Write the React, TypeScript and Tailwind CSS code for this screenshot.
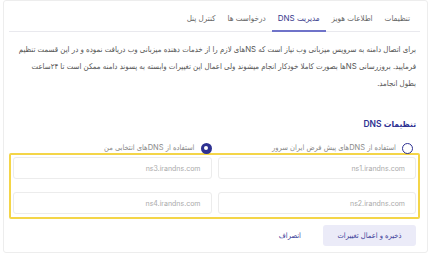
import { useState } from "react";

const tabs = ["تنظیمات", "اطلاعات هویز", "مدیریت DNS", "درخواست ها", "کنترل پنل"];

const servers = ["ns1.irandns.com", "ns3.irandns.com", "ns2.irandns.com", "ns4.irandns.com"];

export default function App() {
  const [active] = useState(2);
  const [mode, setMode] = useState<"default" | "custom">("custom");

  return (
    <div
      dir="rtl"
      className="w-[430px] h-[255px] bg-white pl-[3px] pr-[2px] font-['Inter','DejaVu_Sans_Condensed','DejaVu_Sans',sans-serif]"
    >
      <div className="h-[253px] border border-[#ededed] rounded-[3px] pr-[7px] pl-[5px]">
        {/* tabs */}
        <nav className="flex border-b border-[#e9e9ee] pr-[4px] pt-[10px]">
          {tabs.map((t, i) => (
            <button
              key={t}
              className={
                "px-[6px] pb-[5px] text-[8px] leading-[14px] border-b-2 -mb-px " +
                (i === active ? "border-[#6f73c9] text-[#35388a]" : "border-transparent text-[#666]")
              }
            >
              {t}
            </button>
          ))}
        </nav>

        {/* description */}
        <p className="pt-[9px] pr-[4px] pl-[1px] text-[7.8px] leading-[17px] text-[#555]">
          برای اتصال دامنه به سرویس میزبانی وب نیاز است که NSهای لازم را از خدمات دهنده میزبانی وب دریافت نموده و در این قسمت تنظیم
          فرمایید. بروزرسانی NSها بصورت کاملا خودکار انجام میشوند ولی اعمال این تغییرات وابسته به پسوند دامنه ممکن است تا ۲۴ساعت
          <br />
          بطول انجامد.
        </p>

        <h3 className="pt-[25px] pr-[4px] text-[8.5px] leading-[14px] font-semibold text-[#2e3192]">تنظیمات DNS</h3>

        {/* radios */}
        <div className="grid grid-cols-2 gap-x-[6px] px-[7px] pt-[11px]">
          <label className="flex items-center gap-[6px] text-[7.5px] leading-[12px] text-[#888] cursor-pointer" onClick={() => setMode("default")}>
            <span
              className={
                "w-[11px] h-[11px] rounded-full flex items-center justify-center " +
                (mode === "default" ? "bg-[#2e3192]" : "border-[1.5px] border-[#2e3192]")
              }
            >
              {mode === "default" && <span className="w-[4px] h-[4px] rounded-full bg-white" />}
            </span>
            استفاده از DNSهای پیش فرض ایران سرور
          </label>
          <label className="flex items-center gap-[6px] text-[7.5px] leading-[12px] text-[#888] cursor-pointer" onClick={() => setMode("custom")}>
            <span
              className={
                "w-[11px] h-[11px] rounded-full flex items-center justify-center " +
                (mode === "custom" ? "bg-[#2e3192]" : "border-[1.5px] border-[#2e3192]")
              }
            >
              {mode === "custom" && <span className="w-[4px] h-[4px] rounded-full bg-white" />}
            </span>
            استفاده از DNSهای انتخابی من
          </label>
        </div>

        {/* name servers */}
        <div className="mt-[-1px] border-2 border-[#f4d548] rounded-[2px] p-[1px] pb-[3px]">
          <div className="grid grid-cols-2 gap-x-[6px] gap-y-[13px] px-[1px] pt-[1px]">
            {servers.map((s) => (
              <input
                key={s}
                dir="ltr"
                placeholder={s}
                className="h-[22px] border border-[#ececec] rounded-[3px] px-[10px] text-right text-[7px] outline-none placeholder:text-[#aaa]"
              />
            ))}
          </div>
        </div>

        {/* actions */}
        <div className="flex items-center gap-[22px] pr-[4px] pt-[6px]">
          <button className="w-[93px] h-[21px] rounded-[3px] bg-[#ebebf8] text-[7.5px] text-[#3d3f9a]">
            ذخیره و اعمال تغییرات
          </button>
          <button className="text-[7.5px] text-[#3d3f9a]">انصراف</button>
        </div>
      </div>
    </div>
  );
}
